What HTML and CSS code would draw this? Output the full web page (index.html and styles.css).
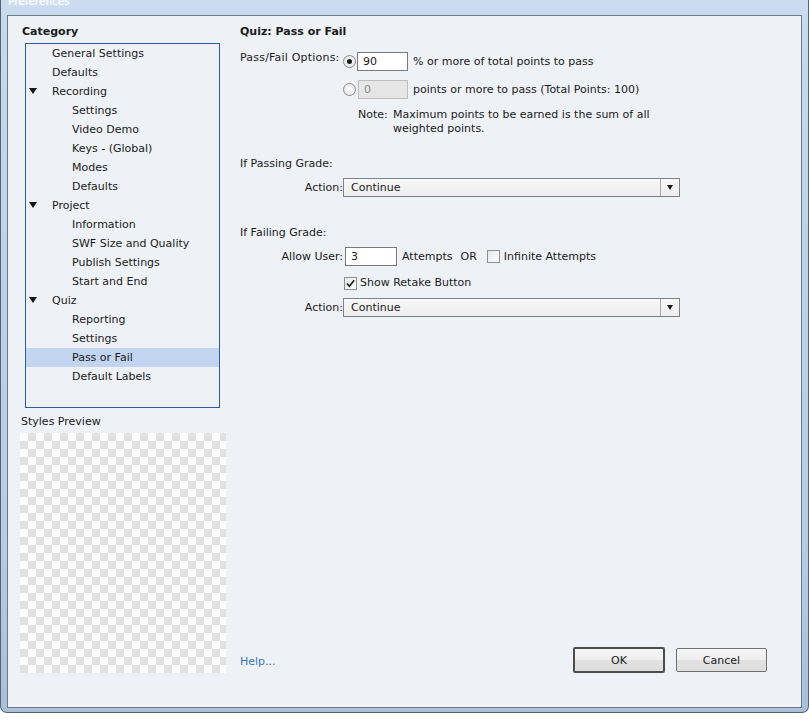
FILE: index.html
```html
<!DOCTYPE html>
<html>
<head>
<meta charset="utf-8">
<title>Preferences</title>
<link rel="stylesheet" href="styles.css">
</head>
<body>
<div class="window">
  <div class="titlebar"><span class="title">Preferences</span></div>
  <div class="client">
    <div class="left">
      <div class="heading cat">Category</div>
      <ul class="tree">
        <li class="l1">General Settings</li>
        <li class="l1">Defaults</li>
        <li class="l1"><span class="tri"></span>Recording</li>
        <li class="l2">Settings</li>
        <li class="l2">Video Demo</li>
        <li class="l2">Keys - (Global)</li>
        <li class="l2">Modes</li>
        <li class="l2">Defaults</li>
        <li class="l1"><span class="tri"></span>Project</li>
        <li class="l2">Information</li>
        <li class="l2">SWF Size and Quality</li>
        <li class="l2">Publish Settings</li>
        <li class="l2">Start and End</li>
        <li class="l1"><span class="tri"></span>Quiz</li>
        <li class="l2">Reporting</li>
        <li class="l2">Settings</li>
        <li class="l2 sel">Pass or Fail</li>
        <li class="l2">Default Labels</li>
      </ul>
      <div class="preview-label">Styles Preview</div>
      <div class="checker"></div>
    </div>
    <div class="right">
      <div class="heading">Quiz: Pass or Fail</div>

      <div class="row r-pf1">
        <span class="lbl lbl-top">Pass/Fail Options:</span>
        <span class="radio checked"></span>
        <span class="input in-90">90</span>
        <span class="txt">% or more of total points to pass</span>
      </div>
      <div class="row r-pf2">
        <span class="lbl"></span>
        <span class="radio"></span>
        <span class="input disabled in-0">0</span>
        <span class="txt">points or more to pass (Total Points: 100)</span>
      </div>
      <div class="note">
        <span>Note:</span>
        <span>Maximum points to be earned is the sum of all weighted points.</span>
      </div>

      <div class="section s-pass">If Passing Grade:</div>
      <div class="row r-action r-action1">
        <span class="lbl">Action:</span>
        <div class="select"><span class="sel-text">Continue</span><span class="sel-arrow"><span class="arrow"></span></span></div>
      </div>

      <div class="section s-fail">If Failing Grade:</div>
      <div class="row r-allow">
        <span class="lbl">Allow User:</span>
        <span class="input in-3">3</span>
        <span class="txt t-att">Attempts</span>
        <span class="txt t-or">OR</span>
        <span class="check c-inf"></span>
        <span class="txt t-inf">Infinite Attempts</span>
      </div>
      <div class="row r-retake">
        <span class="check checked c-retake"><svg width="13" height="13" viewBox="0 0 13 13"><path d="M3 6.5 L5.4 9.2 L10.2 3.2" fill="none" stroke="#1e1e1e" stroke-width="1.7"/></svg></span>
        <span class="txt t-retake">Show Retake Button</span>
      </div>
      <div class="row r-action r-action2">
        <span class="lbl">Action:</span>
        <div class="select"><span class="sel-text">Continue</span><span class="sel-arrow"><span class="arrow"></span></span></div>
      </div>

      <div class="footer">
        <span class="help">Help...</span>
        <div class="btn ok">OK</div>
        <div class="btn cancel">Cancel</div>
      </div>
    </div>
  </div>
</div>
</body>
</html>
```

FILE: styles.css
```css
* { box-sizing: border-box; }
html, body { margin: 0; padding: 0; background: #ffffff; }
body {
  font-family: "DejaVu Sans", Verdana, sans-serif;
  font-size: 11px;
  color: #1b1b1b;
}

.window {
  width: 809px;
  height: 713px;
  display: flex;
  flex-direction: column;
  padding: 0 6px 5px 6px;
  border: 1px solid #55626f;
  border-top: none;
  border-radius: 0 0 7px 7px;
  background: linear-gradient(to bottom, #c8dbef 0, #bdd3ea 35%, #b6cde6 75%, #a9c0da 100%);
}
.titlebar { height: 15px; overflow: hidden; flex: none; }
.title {
  display: block;
  margin-top: -5px;
  padding-left: 1px;
  line-height: 13px;
  font-size: 10.5px;
  color: #ffffff;
  text-shadow: 0 0 5px rgba(255,255,255,0.95);
}

.client {
  flex: 1;
  display: flex;
  gap: 14px;
  border: 1px solid #6d7a88;
  background: #eef1f6;
  padding: 9px 34px 34px 12px;
}

/* left column */
.left { width: 206px; flex: none; display: flex; flex-direction: column; }
.left > * { flex: none; }
.heading { font-weight: bold; line-height: 14px; height: 14px; white-space: nowrap; }
.cat { padding-left: 2px; }
.tree {
  list-style: none;
  margin: 4px 0 0 5px;
  padding: 0;
  width: 195px;
  height: 365px;
  border: 1px solid #2e5c9f;
}
.tree li { height: 19px; line-height: 19px; white-space: nowrap; }
.l1 { padding-left: 26px; }
.l2 { padding-left: 46px; }
.tree li.sel { background: #c2d5f0; }
.tri {
  display: inline-block;
  width: 0; height: 0;
  border-left: 4px solid transparent;
  border-right: 4px solid transparent;
  border-top: 6px solid #141414;
  margin-left: -23px;
  margin-right: 15px;
  vertical-align: 1px;
}
.preview-label { margin-top: 7px; line-height: 14px; padding-left: 1px; }
.checker {
  margin-top: 4px;
  width: 206px;
  height: 240px;
  background: repeating-conic-gradient(#e1e1e1 0 25%, #fdfdfd 0 50%) 0 0 / 16px 16px;
}

/* right column */
.right { flex: 1; display: flex; flex-direction: column; }
.right > * { flex: none; }
.row { display: flex; align-items: center; white-space: nowrap; }
.lbl { width: 103px; flex: none; text-align: right; line-height: 14px; }
.lbl-top { align-self: flex-start; margin-top: -1px; text-align: left; letter-spacing: 0.2px; }
.txt { line-height: 14px; }

.radio {
  width: 13px; height: 13px; flex: none;
  border-radius: 50%;
  border: 1px solid #8c8c8c;
  background: radial-gradient(circle at 50% 50%, #ffffff 0, #f0f0f0 50%, #d9d9d9 100%);
  display: flex; align-items: center; justify-content: center;
}
.radio.checked::after {
  content: "";
  width: 5px; height: 5px;
  border-radius: 50%;
  background: #1c1c1c;
}

.input {
  height: 19px;
  flex: none;
  border: 1px solid #7a7a7a;
  background: #ffffff;
  padding-left: 5px;
  line-height: 17px;
}
.input.disabled { background: #e6e6e6; border-color: #bdbdbd; color: #8c8c8c; }

.r-pf1 { margin-top: 13px; height: 19px; }
.in-90 { width: 51px; margin-left: 1px; }
.r-pf1 .txt, .r-pf2 .txt { margin-left: 5px; }
.r-pf2 { margin-top: 9px; height: 19px; }
.in-0 { width: 50px; margin-left: 2px; }

.note {
  margin-top: 9px;
  margin-left: 118px;
  width: 300px;
  display: grid;
  grid-template-columns: 35px 1fr;
  line-height: 14px;
}

.section { line-height: 14px; }
.s-pass { margin-top: 21px; }
.s-fail { margin-top: 29px; }

.r-action { height: 19px; }
.r-action1 { margin-top: 7px; }
.r-action2 { margin-top: 8px; }
.select {
  width: 337px; height: 19px; flex: none;
  display: flex;
  border: 1px solid #818181;
  background: linear-gradient(#f7f7f7, #ededed);
}
.sel-text { flex: 1; padding-left: 7px; line-height: 17px; }
.sel-arrow {
  width: 19px; flex: none;
  border-left: 1px solid #a9a9a9;
  display: flex; align-items: center; justify-content: center;
}
.arrow {
  width: 0; height: 0;
  border-left: 3.5px solid transparent;
  border-right: 3.5px solid transparent;
  border-top: 5px solid #1a1a1a;
}

.r-allow { margin-top: 7px; height: 19px; }
.in-3 { width: 52px; margin-left: 2px; }
.t-att { margin-left: 5px; }
.t-or { margin-left: 8px; }
.check {
  width: 13px; height: 13px; flex: none;
  border: 1px solid #8e8f8f;
  background: linear-gradient(135deg, #e6e6e6, #ffffff);
  display: block;
  position: relative;
}
.check svg { position: absolute; left: -1px; top: -1px; }
.c-inf { margin-left: 10px; }
.t-inf { margin-left: 4px; }

.r-retake { margin-top: 10px; height: 14px; }
.c-retake { margin-left: 104px; }
.t-retake { margin-left: 3px; }

.footer {
  margin-top: auto;
  height: 26px;
  display: flex;
  align-items: center;
}
.help { color: #3a77b6; padding-top: 4px; line-height: 14px; }
.btn {
  display: flex; align-items: center; justify-content: center;
  background: linear-gradient(#f6f6f6 0, #eeeeee 48%, #e2e2e2 52%, #dcdcdc 100%);
  border: 1px solid #707070;
  border-radius: 2px;
  color: #1b1b1b;
}
.ok { width: 92px; height: 26px; margin-left: auto; border: 2px solid #4c4c4c; }
.cancel { width: 91px; height: 24px; margin-left: 11px; }
```
